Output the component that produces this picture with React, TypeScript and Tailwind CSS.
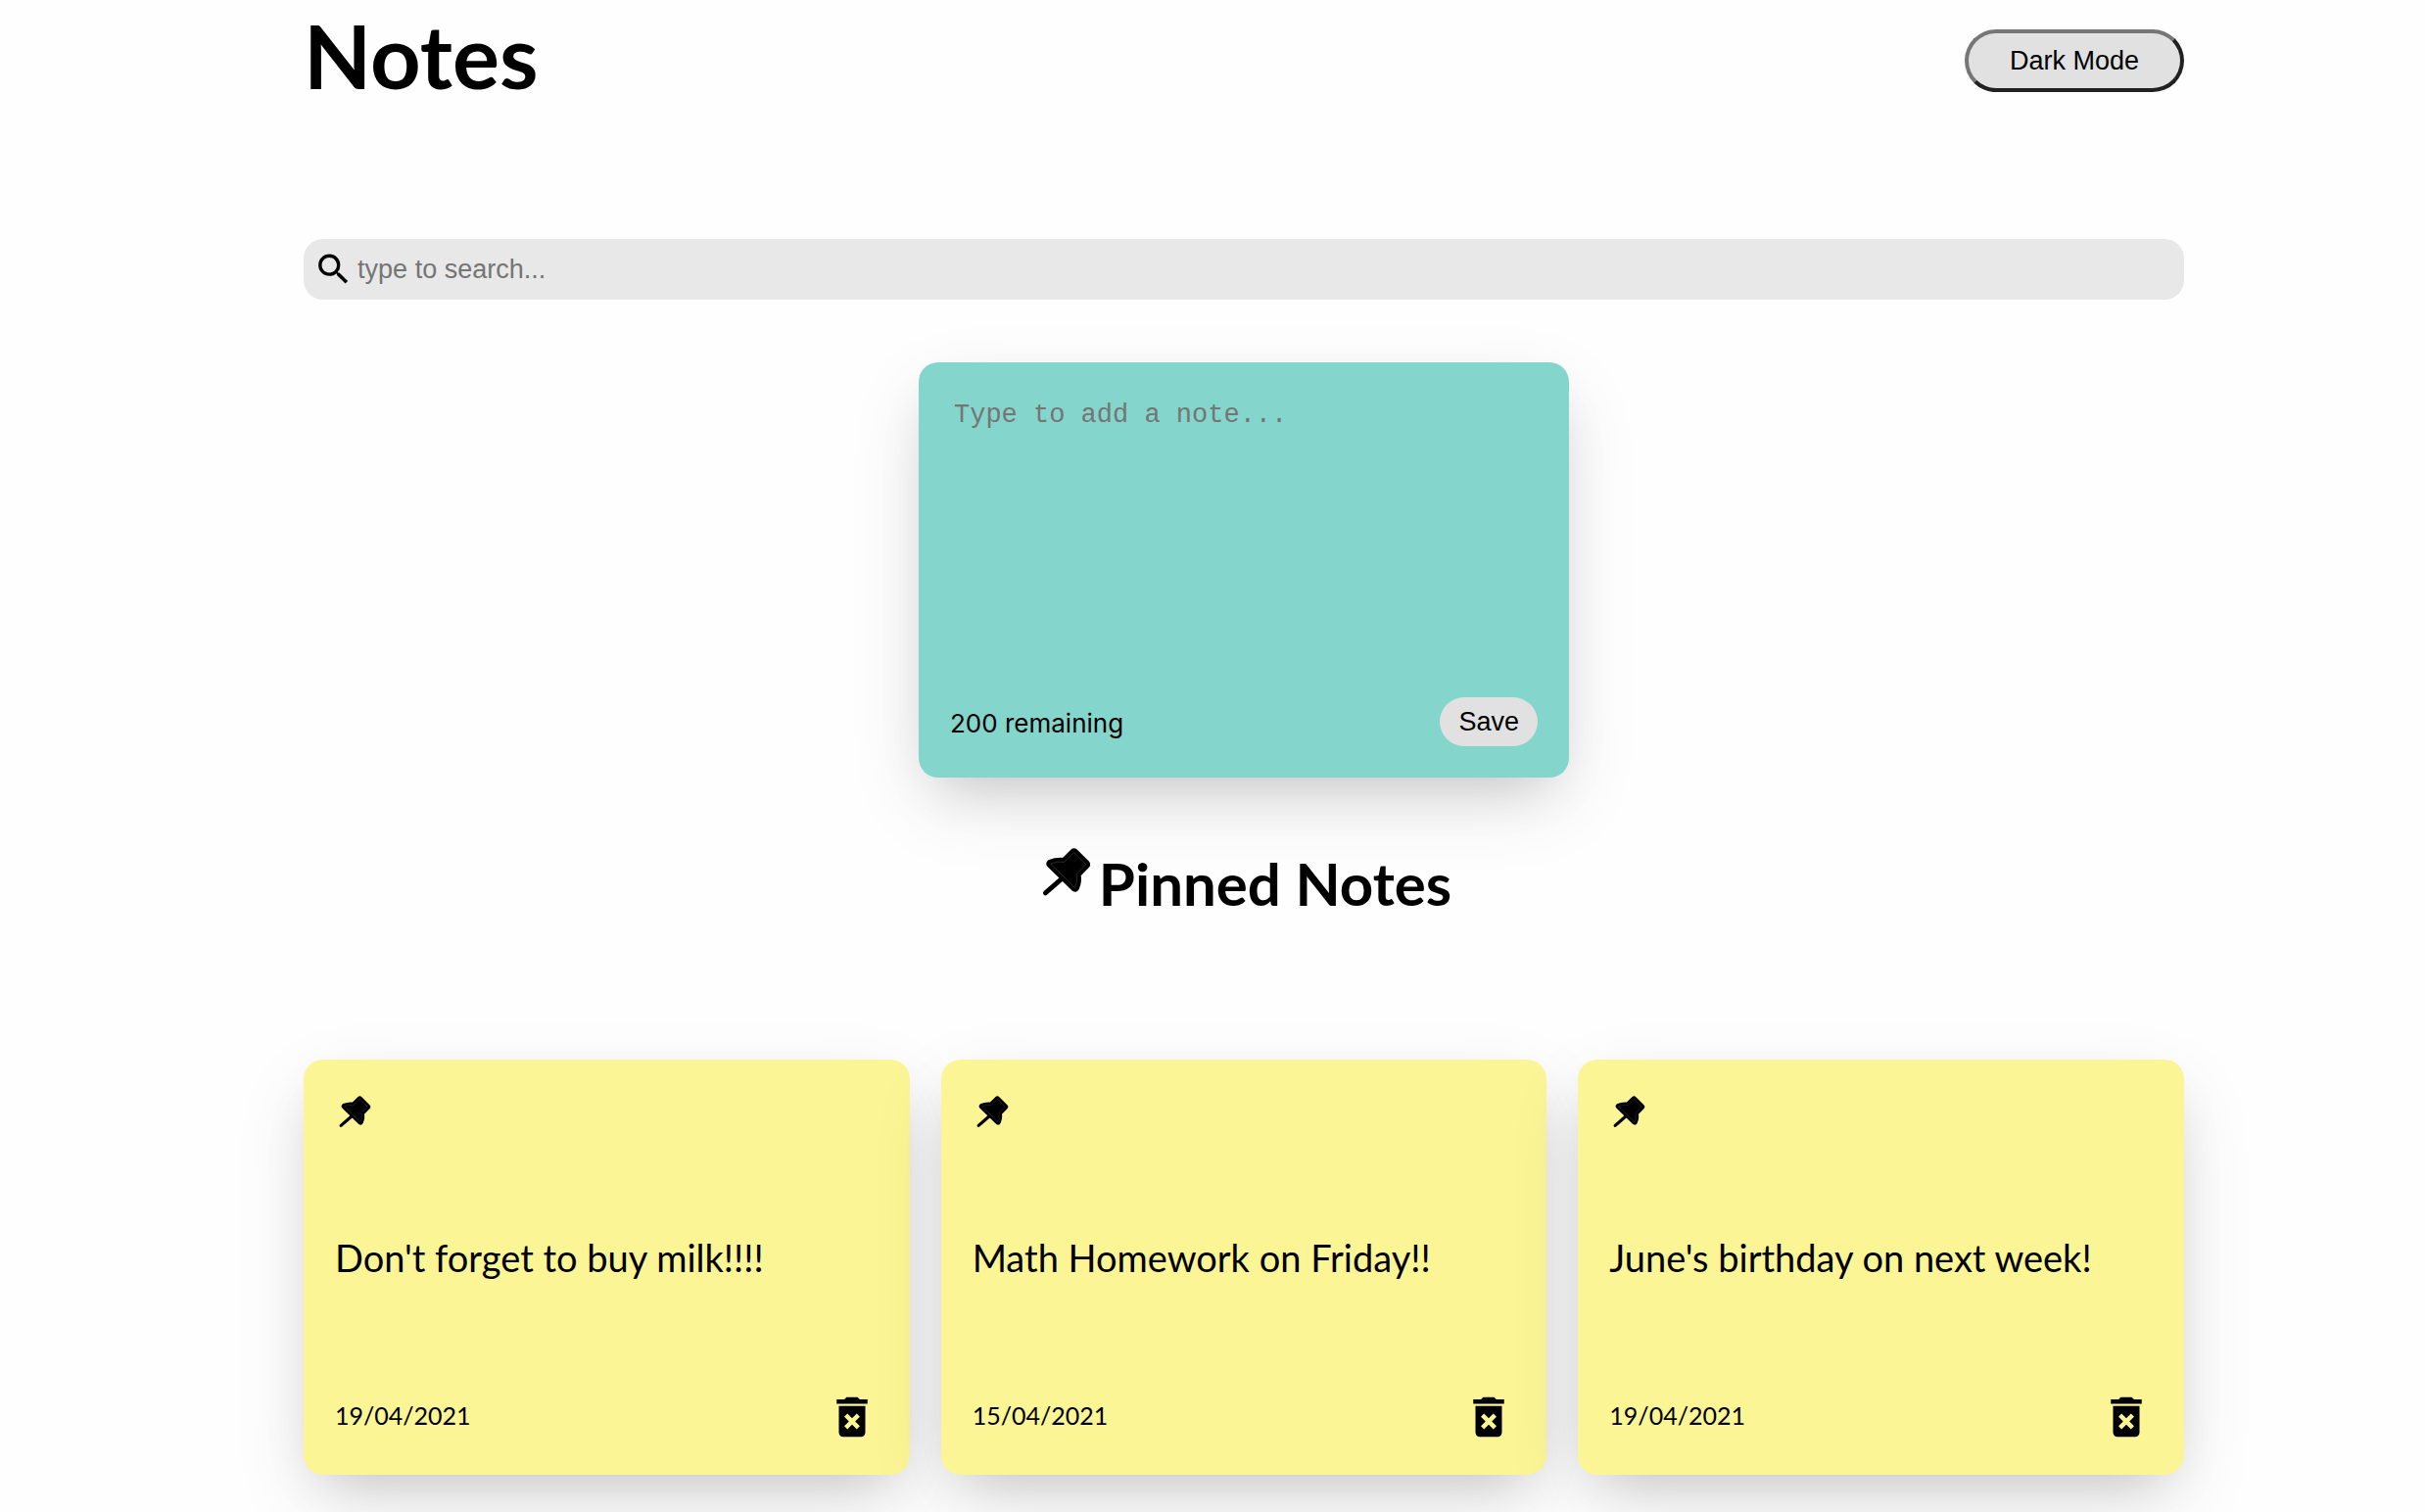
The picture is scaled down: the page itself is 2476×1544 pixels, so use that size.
import { useState } from 'react';
import { MdDeleteForever, MdSearch } from 'react-icons/md';

type Note = { id: number; text: string; date: string };

const NOTES: Note[] = [
  { id: 1, text: "Don't forget to buy milk!!!!", date: '19/04/2021' },
  { id: 2, text: 'Math Homework on Friday!!', date: '15/04/2021' },
  { id: 3, text: "June's birthday on next week!", date: '19/04/2021' },
];

const LIMIT = 200;

function PinIcon({ className }: { className: string }) {
  const head = 'M147 124 L175 96 L210 131 L182 160 Q187 180 178 199 L106 129 Q125 121 147 124 Z';
  return (
    <svg viewBox="64 60 184 184" className={className} aria-hidden="true">
      <path d="M138 174 L91 215" stroke="#000" strokeWidth="14" strokeLinecap="round" />
      <path d={head} fill="#000" stroke="#000" strokeWidth="25" strokeLinejoin="round" />
      <path d={head} fill="none" stroke="#777" strokeWidth="1" />
    </svg>
  );
}

function NoteCard({ note, onDelete }: { note: Note; onDelete: () => void }) {
  return (
    <article className="flex min-h-[424px] flex-col justify-between rounded-[20px] bg-[#fcf596] p-8 shadow-[0_28px_80px_rgba(0,0,0,0.09),0_24px_56px_-24px_rgba(0,0,0,0.2)]">
      <button type="button" aria-label="Unpin note" className="self-start">
        <PinIcon className="size-[42px]" />
      </button>
      <p className="pb-2 text-[38px] leading-[48px]">{note.text}</p>
      <div className="flex items-center justify-between">
        <small className="pb-1 text-[25px] leading-8">{note.date}</small>
        <button type="button" aria-label="Delete note" onClick={onDelete}>
          <MdDeleteForever className="size-[54px]" />
        </button>
      </div>
    </article>
  );
}

export default function App() {
  const [notes, setNotes] = useState(NOTES);
  const [query, setQuery] = useState('');
  const [draft, setDraft] = useState('');
  const [dark, setDark] = useState(false);

  const save = () => {
    if (!draft.trim()) return;
    const date = new Date().toLocaleDateString('en-GB');
    setNotes([...notes, { id: Date.now(), text: draft, date }]);
    setDraft('');
  };

  return (
    <div className={dark ? 'min-h-screen bg-black pl-16' : 'min-h-screen bg-[#fefefe] pl-16'}>
      <main className="mx-auto max-w-[1920px] pb-10 font-['Lato',sans-serif] text-black">
        <header className="flex items-start justify-between">
          <h1 className={dark ? 'text-[90px] leading-[112px] font-bold text-white' : 'text-[90px] leading-[112px] font-bold'}>
            Notes
          </h1>
          <button
            type="button"
            onClick={() => setDark(!dark)}
            className="mt-[30px] h-16 w-56 rounded-full border-4 border-t-[#767676] border-r-[#212121] border-b-[#212121] border-l-[#767676] bg-[#e1e1e1] font-['Liberation_Sans',sans-serif] text-[27px]"
          >
            Dark Mode
          </button>
        </header>

        <label className="mt-[132px] flex items-center rounded-[20px] bg-[#e8e8e8] p-[10px]">
          <MdSearch className="size-[42px]" aria-hidden="true" />
          <input
            type="text"
            aria-label="Search notes"
            placeholder="type to search..."
            value={query}
            onChange={(e) => setQuery(e.target.value)}
            className="w-full pl-1 font-['Liberation_Sans',sans-serif] text-[27px] leading-8 outline-none placeholder:text-[#757575]"
          />
        </label>

        <section className="mx-auto mt-16 flex min-h-[424px] max-w-[664px] flex-col justify-between rounded-[20px] bg-[#84d5cb] p-8 shadow-[0_28px_80px_rgba(0,0,0,0.09),0_24px_56px_-24px_rgba(0,0,0,0.2)]">
          <textarea
            rows={8}
            aria-label="New note"
            placeholder="Type to add a note..."
            maxLength={LIMIT}
            value={draft}
            onChange={(e) => setDraft(e.target.value)}
            className="resize-none px-1 py-1.5 font-['Liberation_Mono',monospace] text-[27px] leading-8 outline-none placeholder:text-[#757575]"
          />
          <div className="flex items-center justify-between">
            <small className="pt-1 font-['Inter',sans-serif] text-[26px] leading-8">{LIMIT - draft.length} remaining</small>
            <button
              type="button"
              onClick={save}
              className="rounded-full bg-[#e1e1e1] px-[19px] py-[9px] font-['Liberation_Sans',sans-serif] text-[27px] leading-8"
            >
              Save
            </button>
          </div>
        </section>

        <h2
          className={
            dark
              ? 'mt-16 mb-[136px] flex items-start justify-center text-[60px] leading-[88px] font-bold text-white'
              : 'mt-16 mb-[136px] flex items-start justify-center text-[60px] leading-[88px] font-bold'
          }
        >
          <PinIcon className="size-16" />
          Pinned Notes
        </h2>

        <section className="grid grid-cols-3 gap-8">
          {notes
            .filter((n) => n.text.toLowerCase().includes(query.toLowerCase()))
            .map((n) => (
              <NoteCard key={n.id} note={n} onDelete={() => setNotes(notes.filter((m) => m.id !== n.id))} />
            ))}
        </section>
      </main>
    </div>
  );
}
